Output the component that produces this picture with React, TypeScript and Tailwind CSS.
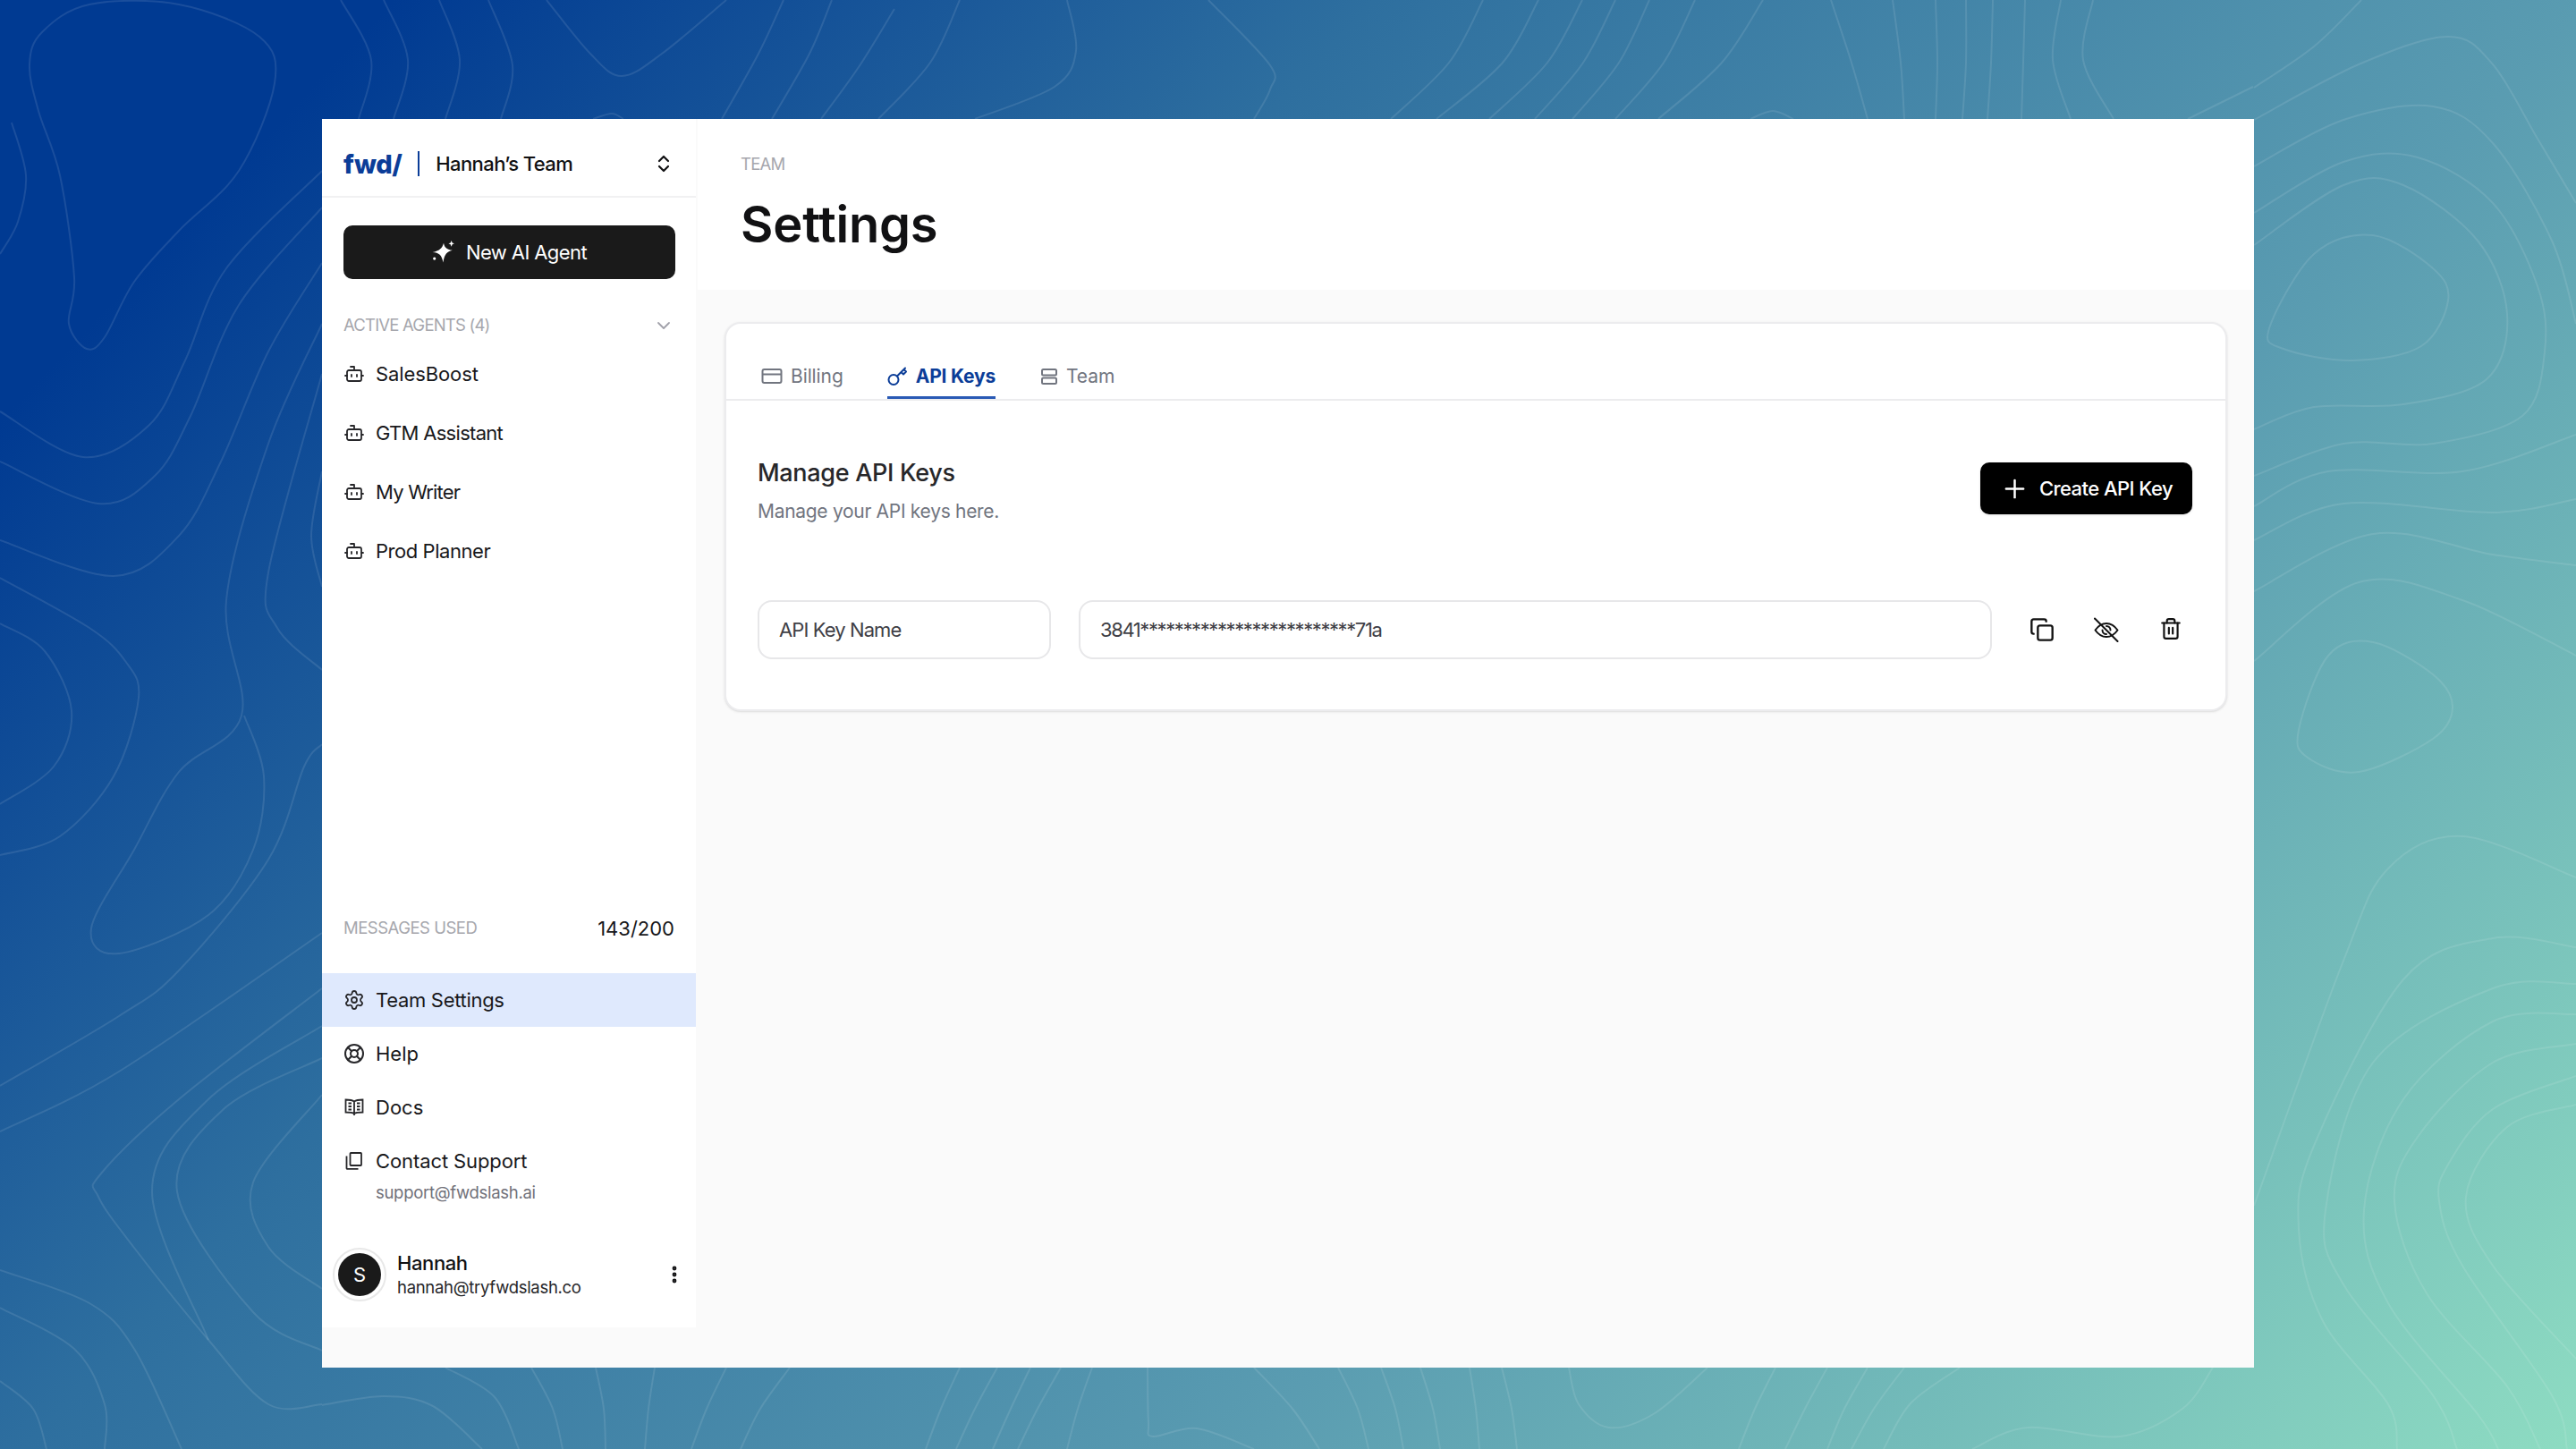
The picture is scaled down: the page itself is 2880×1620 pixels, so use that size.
import React from "react";
import { Bot, ChevronDown, ChevronsUpDown, Copy, EllipsisVertical, LifeBuoy, Plus, Settings, Trash2 } from "lucide-react";

type Pt = [number, number];
const open: Pt[][] = [
  [[13,137],[29,196],[20,248],[0,284]],
  [[0,460],[93,511],[167,475],[207,403],[253,300],[360,191]],
  [[0,516],[110,563],[173,532],[213,465],[267,341],[360,232]],
  [[0,604],[127,644],[200,599],[247,516],[300,393],[360,294]],
  [[0,646],[100,702],[140,739],[155,780],[127,868],[67,935],[0,956]],
  [[0,697],[50,728],[80,795],[60,857],[0,899]],
  [[360,362],[300,496],[253,671],[270,800],[200,863],[150,950],[102,1038],[133,1066],[233,1023],[283,950],[295,868],[273,800]],
  [[360,418],[300,640],[310,702],[360,749]],
  [[360,527],[348,599],[360,656]],
  [[0,1214],[133,1136],[200,1085],[300,961],[340,857],[360,832]],
  [[0,1265],[133,1198],[360,1043]],
  [[360,1105],[200,1229],[113,1312],[110,1338],[150,1395],[233,1498],[300,1570],[360,1570]],
  [[360,1147],[233,1229],[170,1332],[233,1498]],
  [[360,1183],[250,1240],[198,1332],[283,1467],[360,1510]],
  [[360,1224],[283,1322],[300,1394],[360,1441]],
  [[0,1420],[100,1457],[150,1508],[203,1620]],
  [[0,1462],[83,1508],[117,1570],[117,1620]],
  [[0,1544],[37,1575],[52,1620]],
  [[2520,98],[2587,52],[2640,0]],
  [[2520,134],[2637,72],[2737,41],[2787,72],[2837,155],[2880,227]],
  [[2520,186],[2620,134],[2720,119],[2787,160],[2853,269],[2880,362]],
  [[2520,238],[2620,181],[2703,176],[2787,227],[2837,320],[2845,393],[2820,465],[2720,496],[2620,496],[2520,532]],
  [[2520,274],[2620,207],[2687,207],[2770,269],[2803,351],[2780,424],[2687,452],[2587,455],[2520,480]],
  [[2520,566],[2603,527],[2753,527],[2880,486]],
  [[2520,604],[2620,563],[2787,573],[2880,558]],
  [[2520,661],[2653,597],[2787,620],[2880,632]],
  [[2520,739],[2637,651],[2753,671],[2880,733]],
  [[2520,1348],[2620,1074],[2670,971],[2753,935],[2880,981]],
  [[2880,1059],[2787,1049],[2687,1095],[2587,1281],[2570,1374],[2597,1477],[2670,1570],[2680,1620]],
  [[2880,1100],[2787,1105],[2653,1188],[2600,1353],[2620,1436],[2720,1560],[2747,1620]],
  [[2880,1134],[2787,1142],[2687,1229],[2643,1353],[2670,1457],[2770,1581],[2793,1620]],
  [[2880,1167],[2787,1188],[2703,1271],[2677,1343],[2713,1446],[2803,1550],[2840,1620]],
  [[2880,1203],[2787,1240],[2737,1302],[2727,1343],[2753,1415],[2853,1560],[2870,1620]],
  [[2880,1235],[2803,1260],[2757,1338],[2787,1415],[2880,1519]],
  [[381,0],[415,67],[401,133]],[[429,0],[456,67],[440,133]],[[491,0],[514,67],[498,133]],[[546,0],[573,73],[560,133]],
  [[611,0],[660,60],[695,85],[740,60],[812,0]],[[663,133],[684,127],[697,133]],
  [[876,0],[848,60],[807,133]],[[930,0],[905,60],[863,133]],[[1000,10],[960,75],[918,133]],[[1073,0],[1040,70],[982,133]],
  [[1193,0],[1203,57],[1179,97],[1090,133]],[[1351,0],[1420,73],[1420,100],[1402,133]],
  [[1658,0],[1620,70],[1555,133]],[[1720,0],[1680,70],[1606,133]],[[1769,0],[1730,70],[1665,133]],[[1806,0],[1770,70],[1716,133]],[[1844,0],[1810,70],[1758,133]],[[1895,0],[1860,70],[1806,133]],[[1971,0],[1925,70],[1854,133]],
  [[1957,133],[1982,124],[2005,133]],
  [[2047,0],[2070,70],[2088,133]],[[2116,0],[2125,70],[2129,133]],[[2164,0],[2166,70],[2164,133]],[[2198,0],[2198,70],[2194,133]],[[2228,0],[2226,70],[2222,133]],[[2264,0],[2262,70],[2260,133]],
  [[2304,0],[2295,67],[2315,133]],[[2340,0],[2329,67],[2363,133]],[[2519,97],[2446,133]],
  [[360,1571],[429,1561],[484,1572],[539,1620]],[[498,1529],[553,1562],[580,1620]],[[594,1529],[618,1575],[629,1620]],[[666,1529],[675,1575],[677,1620]],
  [[732,1529],[725,1575],[721,1620]],[[812,1529],[790,1575],[773,1620]],[[883,1529],[850,1575],[828,1620]],[[1073,1529],[1052,1575],[1035,1620]],[[1115,1529],[1090,1575],[1069,1620]],
  [[1152,1529],[1130,1575],[1110,1620]],[[1186,1529],[1160,1575],[1138,1620]],[[1221,1529],[1205,1575],[1193,1620]],
  [[1283,1529],[1284,1590],[1289,1606],[1338,1597],[1402,1620]],[[1402,1529],[1445,1575],[1475,1620]],[[1496,1529],[1518,1575],[1530,1620]],[[1544,1529],[1560,1575],[1569,1620]],
  [[1588,1529],[1602,1575],[1610,1620]],[[1643,1529],[1650,1575],[1654,1620]],[[1679,1529],[1690,1575],[1696,1620]],
  [[1754,1529],[1765,1570],[1799,1596],[1850,1580],[1909,1529]],
  [[1985,1529],[1962,1575],[1944,1620]],[[2043,1529],[2018,1575],[1996,1620]],[[2088,1529],[2062,1575],[2043,1620]],[[2129,1529],[2095,1575],[2070,1620]],
  [[2191,1529],[2136,1569],[2106,1620]],[[2205,1620],[2267,1596],[2370,1606],[2440,1575],[2474,1529]],
];
const closed: Pt[][] = [
  [[33,72],[43,124],[67,196],[83,310],[77,362],[97,390],[117,377],[150,315],[200,258],[267,191],[307,93],[290,41],[200,5],[100,5],[47,36]],
  [[2537,367],[2587,284],[2653,263],[2720,300],[2737,336],[2707,387],[2630,403],[2553,390]],
  [[2570,816],[2603,733],[2653,718],[2720,754],[2742,790],[2720,826],[2637,863],[2580,847]],
];

function smooth(p: Pt[], loop: boolean) {
  const n = p.length;
  const at = (i: number) => (loop ? p[(i + n) % n] : p[Math.max(0, Math.min(n - 1, i))]);
  let d = `M${p[0][0]} ${p[0][1]}`;
  const last = loop ? n : n - 1;
  for (let i = 0; i < last; i++) {
    const a = at(i - 1), b = at(i), c = at(i + 1), e = at(i + 2);
    const c1x = b[0] + (c[0] - a[0]) / 6, c1y = b[1] + (c[1] - a[1]) / 6;
    const c2x = c[0] - (e[0] - b[0]) / 6, c2y = c[1] - (e[1] - b[1]) / 6;
    d += ` C${c1x.toFixed(1)} ${c1y.toFixed(1)} ${c2x.toFixed(1)} ${c2y.toFixed(1)} ${c[0]} ${c[1]}`;
  }
  return d;
}

function Contours() {
  return (
    <svg className="absolute inset-0 w-full h-full" viewBox="0 0 2880 1620" fill="none" stroke="#ffffff" strokeOpacity="0.1" strokeWidth="2">
      {open.map((p, i) => <path key={i} d={smooth(p, false)} />)}
      {closed.map((p, i) => <path key={i} d={smooth(p, true)} />)}
    </svg>
  );
}

const Sparkle = () => (
  <svg width="26" height="26" viewBox="0 0 24 24" fill="#ffffff">
    <path d="M12 2.500c.8 4 2.500 6.500 9 7.500-5.500 1.500-8 3.500-9.500 12.500C10 15 7.500 12.500 0.500 12 7.500 10.500 10.500 8 12 2.500z" />
    <path d="M20 0l0.900 2.200 2.100 0.900-2.100 0.900-0.900 2.200-0.900-2.200-2.100-0.900 2.100-0.900z" />
    <circle cx="2.500" cy="18.500" r="1.500" />
  </svg>
);
const BookIcon = () => (
  <svg width="22" height="22" viewBox="0 0 22 22" fill="none" stroke="currentColor" strokeWidth="1.800">
    <path d="M11 4.500C9 3 4 2.500 1.500 2.500v14c2.500 0 7.500 0 9.500 1.500 2-1.500 7-1.500 9.500-1.500v-14C18 2.500 13 3 11 4.500zM11 4.500V20" />
    <path d="M4.500 6.500h3.500M4.500 10h3.500M4.500 13.500h3.500M14 6.500h3.500M14 10h3.500M14 13.500h3.500" />
  </svg>
);
const PagesIcon = () => (
  <svg width="22" height="22" viewBox="0 0 22 22" fill="none" stroke="currentColor" strokeWidth="1.800" strokeLinejoin="round">
    <rect x="6.500" y="2" width="12.500" height="14" rx="0.800" />
    <path d="M2.500 5.500V19a0.800 0.800 0 0 0 .8.8H15.500" />
  </svg>
);
const CardIcon = () => (
  <svg width="24" height="20" viewBox="0 0 24 20" fill="none" stroke="currentColor" strokeWidth="2">
    <rect x="1.500" y="2" width="21" height="15" rx="2" />
    <path d="M1.500 7.500h21" />
  </svg>
);
const KeyIcon = () => (
  <svg width="23" height="23" viewBox="0 0 23 23" fill="none" stroke="currentColor" strokeWidth="2" strokeLinecap="round" strokeLinejoin="round">
    <circle cx="7" cy="15.500" r="5.500" />
    <path d="M11 11.500L20 2.500M15.500 7l2.500 2.500 3-3-2.500-2.500" />
  </svg>
);
const RowsIcon = () => (
  <svg width="20" height="20" viewBox="0 0 20 20" fill="none" stroke="currentColor" strokeWidth="2">
    <rect x="2" y="2" width="16" height="6.500" rx="1.500" />
    <rect x="2" y="11.500" width="16" height="6.500" rx="1.500" />
  </svg>
);
const EyeSlash = () => (
  <svg width="28" height="28" viewBox="0 0 28 28" fill="none" stroke="#111111" strokeWidth="2" strokeLinecap="round" strokeLinejoin="round">
    <path d="M1.500 14.500C5 9.500 9.500 7 14 7s9 2.500 12.500 7.500C23 19.500 18.500 22 14 22S5 19.500 1.500 14.500z" />
    <path d="M14 10a4.500 4.500 0 0 1 4.500 4.500" />
    <path d="M9.500 14.500A4.500 4.500 0 0 0 14 19" />
    <path d="M1 1.500l25.500 25.500" />
  </svg>
);

function NavItem({ icon, label, className = "", textClass = "" }: { icon: React.ReactNode; label: string; className?: string; textClass?: string }) {
  return (
    <div className={`flex items-center pl-6 text-[22px] text-[#18181b] ${className}`}>
      <span className="flex w-[24px] justify-center text-[#27272a]">{icon}</span>
      <span className={`ml-[12px] ${textClass}`}>{label}</span>
    </div>
  );
}

const agents = [
  { name: "SalesBoost", t: "tracking-[-0.1px]" },
  { name: "GTM Assistant", t: "tracking-[-0.7px]" },
  { name: "My Writer", t: "tracking-[-0.8px]" },
  { name: "Prod Planner", t: "tracking-[-0.45px]" },
];

function Sidebar() {
  return (
    <aside className="flex h-[1351px] w-[418px] shrink-0 flex-col bg-white">
      <div className="flex h-[88px] shrink-0 items-center border-b-2 border-[#f1f1f2] pl-6 pr-[24px] pt-[14px]">
        <span className="text-[29px] font-extrabold leading-none tracking-[-0.5px] text-[#0b3d98]">fwd/</span>
        <span className="ml-[18px] h-[28px] w-[2px] bg-[#0b3d98]" />
        <span className="ml-[18px] flex-1 text-[22px] font-medium tracking-[-0.6px] text-[#111113]">Hannah’s Team</span>
        <ChevronsUpDown size={24} strokeWidth={2.200} className="text-[#111113]" />
      </div>
      <button className="ml-6 mr-[23px] mt-[31px] flex h-[60px] shrink-0 items-center justify-center gap-[12px] rounded-[10px] bg-[#1a1a1a] text-[22px] tracking-[-0.6px] text-white">
        <Sparkle />
        <span>New AI Agent</span>
      </button>
      <div className="mt-[38px] flex h-[28px] shrink-0 items-center pl-6 pr-[24px]">
        <span className="flex-1 text-[18.5px] tracking-[-0.8px] text-[#a6a7ad]">ACTIVE AGENTS (4)</span>
        <ChevronDown size={24} strokeWidth={1.800} className="text-[#a1a1aa]" />
      </div>
      <div className="mt-[7px] flex flex-col">
        {agents.map((a) => (
          <NavItem key={a.name} label={a.name} textClass={a.t} className="h-[66px]" icon={<Bot size={26} strokeWidth={1.800} />} />
        ))}
      </div>
      <div className="flex-1" />
      <div className="flex h-[28px] shrink-0 items-center pl-6 pr-[24px]">
        <span className="flex-1 text-[18.5px] tracking-[-0.5px] text-[#a6a7ad]">MESSAGES USED</span>
        <span className="text-[22px] text-[#18181b]">143/200</span>
      </div>
      <NavItem label="Team Settings" textClass="tracking-[-0.3px]" className="mt-[36px] h-[60px] bg-[#dfe9fd]" icon={<Settings size={24} strokeWidth={1.800} />} />
      <NavItem label="Help" className="h-[60px]" icon={<LifeBuoy size={24} strokeWidth={2} />} />
      <NavItem label="Docs" className="h-[60px]" icon={<BookIcon />} />
      <NavItem label="Contact Support" textClass="tracking-[-0.1px]" className="h-[60px]" icon={<PagesIcon />} />
      <div className="-mt-[7px] pl-[60px] text-[18.5px] leading-[24px] tracking-[-0.3px] text-[#71717a]">support@fwdslash.ai</div>
      <div className="mb-[29px] mt-[50px] flex items-center pl-3 pr-[12px]">
        <div className="flex h-[60px] w-[60px] items-center justify-center rounded-full border-2 border-[#e8e8e8]">
          <div className="flex h-[48px] w-[48px] items-center justify-center rounded-full bg-[#1a1a1a] text-[22px] text-white">S</div>
        </div>
        <div className="ml-3 flex-1">
          <div className="text-[22px] font-medium leading-[28px] tracking-[-0.4px] text-[#111113]">Hannah</div>
          <div className="text-[18.5px] leading-[26px] tracking-[-0.3px] text-[#27272a]">hannah@tryfwdslash.co</div>
        </div>
        <EllipsisVertical size={24} strokeWidth={2.800} className="text-[#111113]" />
      </div>
    </aside>
  );
}

function Tab({ icon, label, active = false, className = "" }: { icon: React.ReactNode; label: string; active?: boolean; className?: string }) {
  return (
    <div className={`flex h-[54px] items-center gap-[9px] border-b-[3px] pt-[6px] text-[21px] ${active ? "border-[#2a5ab5] font-bold tracking-[-0.2px] text-[#0b3d98]" : "border-transparent tracking-[-0.1px] text-[#71757f]"} ${className}`}>
      {icon}
      <span>{label}</span>
    </div>
  );
}

function Card() {
  return (
    <section className="ml-[32px] mr-[30px] mt-[36px] h-[435px] rounded-[18px] border-2 border-[#ececee] bg-white shadow-sm">
      <div className="flex h-[86px] items-end border-b-2 border-[#ececee] pl-[39px]">
        <Tab label="Billing" icon={<CardIcon />} />
        <Tab label="API Keys" active className="ml-[49px]" icon={<KeyIcon />} />
        <Tab label="Team" className="ml-[50px]" icon={<RowsIcon />} />
      </div>
      <div className="pl-[35px] pr-[37px]">
        <div className="flex items-start justify-between pt-[63px]">
          <div>
            <h2 className="text-[27px] font-medium leading-[36px] tracking-[-0.3px] text-[#27272a]">Manage API Keys</h2>
            <p className="mt-[10px] text-[21px] leading-[30px] tracking-[-0.3px] text-[#71757f]">Manage your API keys here.</p>
          </div>
          <button className="mt-[6px] flex h-[58px] w-[237px] items-center justify-center gap-[11px] rounded-[10px] bg-black text-[22px] font-medium tracking-[-0.55px] text-white shadow-sm">
            <Plus size={33} strokeWidth={1.800} />
            <span>Create API Key</span>
          </button>
        </div>
        <div className="-mr-3 mt-[84px] flex items-center">
          <div className="flex h-[66px] w-[328px] items-center rounded-[16px] border-2 border-[#e7e7e9] bg-white px-[22px] text-[22px] tracking-[-0.9px] text-[#3f3f46]">API Key Name</div>
          <div className="ml-[31px] flex h-[66px] flex-1 items-center rounded-[16px] border-2 border-[#e7e7e9] bg-white px-[22px] text-[22px] tracking-[-1.4px] text-[#3f3f46]">3841*************************71a</div>
          <div className="ml-[20px] flex">
            <span className="flex w-[72px] justify-center"><Copy size={28} strokeWidth={2} className="text-[#111111]" /></span>
            <span className="flex w-[72px] justify-center"><EyeSlash /></span>
            <span className="flex w-[72px] justify-center"><Trash2 size={26} strokeWidth={2} className="text-[#111111]" /></span>
          </div>
        </div>
      </div>
    </section>
  );
}

export default function App() {
  return (
    <div className="relative h-[1620px] w-[2880px] overflow-hidden bg-[linear-gradient(133deg,#003a92_10%,#2e6f9f_35%,#5a9cb1_66%,#8edcc2_100%)] font-[Inter,sans-serif]">
      <Contours />
      <div className="relative flex justify-center pt-[133px]">
        <div className="flex h-[1396px] w-[2160px] items-start bg-[#fafafa]">
          <Sidebar />
          <main className="flex h-full flex-1 flex-col">
            <header className="h-[191px] border-l-2 border-[#fafafa] bg-white pl-[48px] pt-[38px]">
              <div className="text-[18.5px] leading-[24px] tracking-[-0.8px] text-[#a6a7ad]">TEAM</div>
              <h1 className="mt-[22px] text-[56px] font-semibold leading-[68px] tracking-[-0.2px] text-[#111113]">Settings</h1>
            </header>
            <Card />
          </main>
        </div>
      </div>
    </div>
  );
}
